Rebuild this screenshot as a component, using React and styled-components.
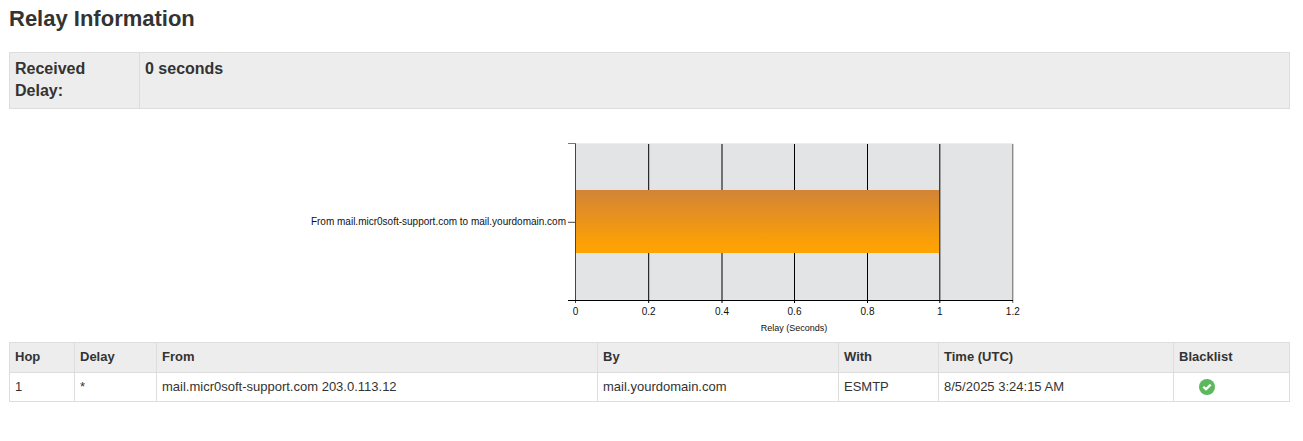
import React from "react";
import styled, { createGlobalStyle } from "styled-components";

const GlobalStyle = createGlobalStyle`
  * { box-sizing: border-box; }
  body {
    margin: 0;
    background: #fff;
    color: #333;
    font-family: "Liberation Sans", Arial, Helvetica, sans-serif;
    font-size: 13px;
    line-height: 18px;
  }
`;

const Page = styled.main`
  padding: 5px 13px 24px 9px;
`;

const Title = styled.h1`
  margin: 0 0 19px;
  font-size: 22px;
  line-height: 28px;
  font-weight: 700;
`;

const Table = styled.table`
  width: 100%;
  table-layout: fixed;
  border-collapse: collapse;
`;

const Col = styled.col`
  width: ${(p) => (p.$width ? `${p.$width}px` : "auto")};
`;

const SummaryCell = styled.td`
  padding: 5px 5px 6px;
  border: 1px solid #ddd;
  background: #ededed;
  font-size: 16px;
  line-height: 22px;
  font-weight: 700;
  text-align: left;
  vertical-align: top;
`;

const HeadCell = styled.th`
  height: 30px;
  padding: 5px 5px 6px;
  border: 1px solid #ddd;
  background: #ededed;
  text-align: left;
  vertical-align: top;
`;

const Cell = styled.td`
  height: 29px;
  padding: 5px;
  border: 1px solid #ddd;
  vertical-align: top;
`;

const ChartArea = styled.figure`
  display: flex;
  justify-content: center;
  margin: 20px 0 0;
`;

const Chart = styled.svg`
  display: block;
  flex: none;
  font-size: 10px;
  fill: #111;
`;

const Status = styled.span`
  display: flex;
  padding: 1px 0 0 20px;
`;

const ticks = [
  { label: "0", x: 286.5 },
  { label: "0.2", x: 359.7 },
  { label: "0.4", x: 433 },
  { label: "0.6", x: 505.5 },
  { label: "0.8", x: 578.5 },
  { label: "1", x: 650.8 },
  { label: "1.2", x: 723.8 },
];

function RelayChart() {
  return (
    <Chart width="721" height="213" viewBox="0 0 721 213" overflow="visible" role="img" aria-label="Relay delay in seconds">
      <defs>
        <linearGradient id="bar" x1="0" y1="0" x2="0" y2="1">
          <stop offset="0" stopColor="#d28436" />
          <stop offset="0.85" stopColor="#fca006" />
          <stop offset="1" stopColor="#ffa500" />
        </linearGradient>
      </defs>
      <rect x="287" y="14" width="437" height="157" fill="#e3e4e6" />
      <rect x="287" y="14" width="437" height="1" fill="#eeeeef" />
      {ticks.slice(1).map((t) => (
        <line
          key={t.label}
          x1={t.x}
          x2={t.x}
          y1="15"
          y2="174"
          stroke={t.label === "1.2" ? "#666" : "#000"}
        />
      ))}
      <rect x="287" y="61" width="364" height="63" fill="url(#bar)" />
      <line x1="650.5" x2="650.5" y1="61" y2="124" stroke="#000" strokeOpacity="0.55" />
      <line x1="286.5" x2="286.5" y1="14" y2="174" stroke="#444" />
      <line x1="279" x2="287" y1="14.5" y2="14.5" stroke="#777" />
      <line x1="279" x2="287" y1="93.3" y2="93.3" stroke="#444" />
      <line x1="279" x2="724" y1="171.5" y2="171.5" stroke="#000" />
      <text x="277" y="96" textAnchor="end">
        From mail.micr0soft-support.com to mail.yourdomain.com
      </text>
      {ticks.map((t) => (
        <text key={t.label} x={t.x} y="186" textAnchor="middle">
          {t.label}
        </text>
      ))}
      <text x="505" y="202" textAnchor="middle" fontSize="9">
        Relay (Seconds)
      </text>
    </Chart>
  );
}

function CheckIcon() {
  return (
    <svg width="16" height="16" viewBox="0 0 16 16" role="img" aria-label="Not blacklisted">
      <circle cx="8" cy="8" r="8" fill="#5cb85c" />
      <path d="M4.3 7.7 L7 10.3 L11.7 5.6" fill="none" stroke="#fff" strokeWidth="2.2" />
    </svg>
  );
}

const columns = [
  { name: "Hop", width: 65 },
  { name: "Delay", width: 82 },
  { name: "From" },
  { name: "By", width: 241 },
  { name: "With", width: 100 },
  { name: "Time (UTC)", width: 235 },
  { name: "Blacklist", width: 116 },
];

const hops = [
  {
    hop: "1",
    delay: "*",
    from: "mail.micr0soft-support.com 203.0.113.12",
    by: "mail.yourdomain.com",
    protocol: "ESMTP",
    time: "8/5/2025 3:24:15 AM",
  },
];

export default function App() {
  return (
    <Page>
      <GlobalStyle />
      <Title>Relay Information</Title>
      <Table>
        <colgroup>
          <Col $width={130} />
          <Col />
        </colgroup>
        <tbody>
          <tr>
            <SummaryCell as="th" scope="row">Received Delay:</SummaryCell>
            <SummaryCell>0 seconds</SummaryCell>
          </tr>
        </tbody>
      </Table>
      <ChartArea>
        <RelayChart />
      </ChartArea>
      <Table>
        <colgroup>
          {columns.map((c) => (
            <Col key={c.name} $width={c.width} />
          ))}
        </colgroup>
        <thead>
          <tr>
            {columns.map((c) => (
              <HeadCell key={c.name} scope="col">{c.name}</HeadCell>
            ))}
          </tr>
        </thead>
        <tbody>
          {hops.map((h) => (
            <tr key={h.hop}>
              <Cell>{h.hop}</Cell>
              <Cell>{h.delay}</Cell>
              <Cell>{h.from}</Cell>
              <Cell>{h.by}</Cell>
              <Cell>{h.protocol}</Cell>
              <Cell>{h.time}</Cell>
              <Cell>
                <Status>
                  <CheckIcon />
                </Status>
              </Cell>
            </tr>
          ))}
        </tbody>
      </Table>
    </Page>
  );
}
